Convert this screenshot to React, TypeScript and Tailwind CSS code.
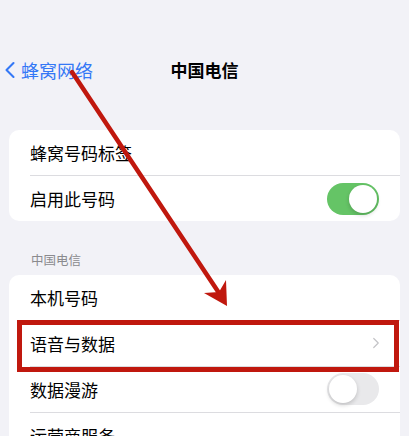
import { ChevronLeft, ChevronRight } from "lucide-react";

const font = { fontFamily: '"Noto Sans CJK SC", "Noto Sans", sans-serif' };

type RowProps = {
  label: string;
  right?: React.ReactNode;
  divider?: boolean;
};

const Toggle = ({ on }: { on: boolean }) => (
  <div
    className={`flex items-center w-[52px] h-[32px] rounded-full p-[2px] ${
      on ? "bg-[#65c466] justify-end" : "bg-[#e9e9eb] justify-start"
    }`}
  >
    <div className="w-[28px] h-[28px] rounded-full bg-white shadow-[0_2px_4px_rgba(0,0,0,0.18)]" />
  </div>
);

const Row = ({ label, right, divider = true }: RowProps) => (
  <div className="flex flex-col pl-[21px]">
    <div className="flex items-center justify-between h-[45px] pr-[21px]">
      <span className="text-[17px] text-black">{label}</span>
      {right}
    </div>
    {divider && <div className="h-px bg-[#dcdce0]" />}
  </div>
);

export default function App() {
  return (
    <div
      className="relative w-[409px] h-[436px] overflow-hidden bg-[#f2f2f7]"
      style={font}
    >
      {/* nav bar */}
      <div className="relative flex items-center h-[60px] mt-[40px]">
        <div className="flex items-center text-[#3478f6]">
          <ChevronLeft size={28} strokeWidth={1.8} className="-ml-[4px]" />
          <span className="text-[18px] ml-[-3px]">蜂窝网络</span>
        </div>
        <div className="absolute left-0 right-0 text-center text-[17px] font-semibold text-black">
          中国电信
        </div>
      </div>

      {/* first group */}
      <div className="mx-[9px] mt-[30px] bg-white rounded-[10px] overflow-hidden">
        <Row label="蜂窝号码标签" />
        <Row label="启用此号码" divider={false} right={<Toggle on />} />
      </div>

      <div className="px-[31px] mt-[30px] mb-[5px] text-[12.5px] text-[#8a8a8e]">
        中国电信
      </div>

      {/* second group */}
      <div className="mx-[9px] bg-white rounded-[10px] overflow-hidden">
        <Row label="本机号码" />
        <div className="relative">
          <Row
            label="语音与数据"
            right={<ChevronRight size={18} strokeWidth={1.6} className="text-[#c4c4c7] -mr-[6px]" />}
          />
          <div className="absolute left-[8px] right-[1px] top-[-1px] bottom-[-5px] border-[5px] border-[#c0180e]" />
        </div>
        <Row label="数据漫游" right={<Toggle on={false} />} />
        <Row label="运营商服务" divider={false} />
      </div>

      {/* annotation arrow */}
      <svg
        className="absolute inset-0 pointer-events-none"
        width="409"
        height="436"
        viewBox="0 0 409 436"
      >
        <line x1="72" y1="72" x2="219" y2="293" stroke="#c0180e" strokeWidth="4.5" strokeLinecap="round" />
        <polygon points="227,306 204,293 219,292 226,280" fill="#c0180e" />
      </svg>
    </div>
  );
}
